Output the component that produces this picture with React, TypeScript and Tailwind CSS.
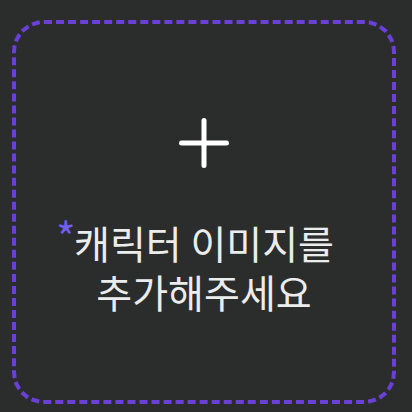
import React from "react";

export default function App() {
  return (
    <div className="w-[412px] h-[412px] bg-[#2b2c2c] overflow-hidden">
      <div className="ml-[12px] pt-[20px]">
        <div className="w-[384px] h-[384px] rounded-[32px] border-[4px] border-dashed border-[#6a40d8] flex flex-col items-center pt-[94px]">
          <svg width="50" height="50" viewBox="0 0 50 50" className="block">
            <path d="M25 2.5v45M2.5 25h45" stroke="#ffffff" strokeWidth="5" strokeLinecap="round" fill="none" />
          </svg>
          <div
            className="mt-[50px] text-center text-[39px] leading-[49px] text-[#ececec] whitespace-nowrap"
            style={{ fontFamily: '"Noto Sans CJK KR", "Noto Sans", sans-serif' }}
          >
            <div className="relative">
              <span className="absolute left-[-18px] top-[-3px] text-[42px] leading-none text-[#6f5ef0]">*</span>
              캐릭터 이미지를
            </div>
            <div>추가해주세요</div>
          </div>
        </div>
      </div>
    </div>
  );
}
